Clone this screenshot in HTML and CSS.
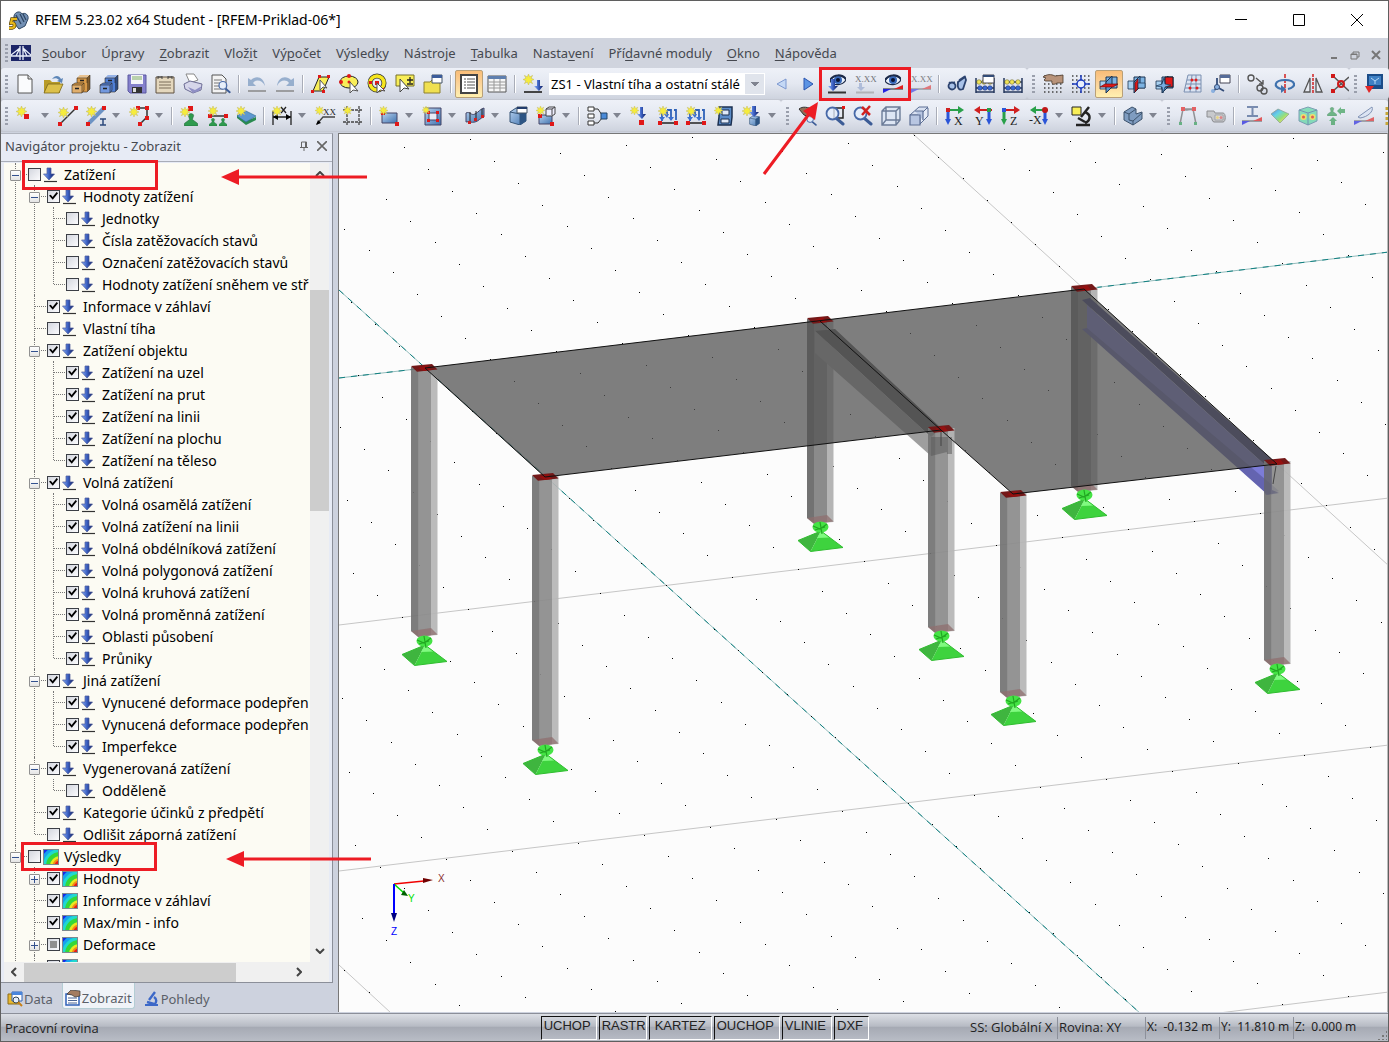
FILE: index.html
```html
<!DOCTYPE html>
<html lang="cs">
<head>
<meta charset="utf-8">
<title>RFEM 5.23.02 x64 Student</title>
<link rel="stylesheet" href="styles.css">
</head>
<body>
<svg class="defs" aria-hidden="true">
  <defs>
    <linearGradient id="g-blue" x1="0" y1="0" x2="1" y2="1"><stop offset="0" stop-color="#b9d3f0"/><stop offset="1" stop-color="#3f72ae"/></linearGradient>
    <linearGradient id="g-load" x1="0" y1="0" x2="1" y2="0"><stop offset="0" stop-color="#8db4ff"/><stop offset=".5" stop-color="#3b5fc0"/><stop offset="1" stop-color="#0c1a5c"/></linearGradient>
    <linearGradient id="g-rain" x1="0" y1="0" x2="1" y2="1"><stop offset="0" stop-color="#3355dd"/><stop offset=".35" stop-color="#3dcde0"/><stop offset=".6" stop-color="#7ddc50"/><stop offset=".8" stop-color="#f2e03a"/><stop offset="1" stop-color="#e8402a"/></linearGradient>
    <symbol id="star" viewBox="0 0 12 12"><path d="M6 0l1.300 3.200L10.500 1.500 8.800 4.700 12 6 8.800 7.300l1.700 3.200-3.200-1.700L6 12 4.700 8.800 1.500 10.500l1.700-3.200L0 6l3.200-1.300L1.500 1.500l3.200 1.700z" fill="#f6ec3c" stroke="#c4bb60" stroke-width=".6"/></symbol>
    <symbol id="node" viewBox="0 0 4 4"><rect width="4" height="4" fill="#e01818"/></symbol>
    <symbol id="eye" viewBox="0 0 16 12"><path d="M0 7C3 1 12 0 16 6 12 12 4 12 0 7z" fill="#e9f1fc" stroke="#1c2a48" stroke-width="1.200"/><circle cx="8" cy="6" r="4" fill="#3768b8"/><circle cx="8" cy="6" r="2" fill="#0a1230"/><path d="M0 6C4 0 12 0 16 5" fill="none" stroke="#1c2a48" stroke-width="2"/></symbol>
    <symbol id="diag" viewBox="0 0 20 8"><path d="M0 4h20" stroke="#222" stroke-width="1"/><path d="M0 8V4h8z" fill="#2323e0"/><path d="M20 0v4h-9z" fill="#e02020"/></symbol>
    <symbol id="load" viewBox="0 0 16 16"><path d="M4 1h4v6h3.500L6 13 .5 7H4z" fill="url(#g-load)" stroke="#4a5a9a" stroke-width=".7"/><path d="M1 14.500h13" stroke="#333" stroke-width="1.200"/></symbol>
    <symbol id="contour" viewBox="0 0 16 16"><rect width="16" height="16" fill="#1728e8"/><g clip-path="url(#sq)"><circle cx="17" cy="17" r="20" fill="#18a0f0"/><circle cx="17" cy="17" r="17" fill="#20d8d0"/><circle cx="17" cy="17" r="14" fill="#35d838"/><circle cx="17" cy="17" r="10" fill="#e8e820"/><circle cx="17" cy="17" r="7.500" fill="#f58a18"/><circle cx="17" cy="17" r="5.500" fill="#e81c1c"/></g><rect x=".5" y=".5" width="15" height="15" fill="none" stroke="#7d8a8f"/></symbol>
    <clipPath id="sq"><rect width="16" height="16"/></clipPath>
    <symbol id="cabinet" viewBox="0 0 20 20"><path d="M6 4l3-3h10v14l-3 3H6z"/><path d="M16 4l3-3v14l-3 3z" fill="#000" fill-opacity=".4"/><path d="M6 4l3-3h10l-3 3z" fill="#fff" fill-opacity=".4"/><path d="M1 11l3-2h9v7l-2 3H1z"/><path d="M1 11h10v8H1z" fill="#fff" fill-opacity=".2"/><path d="M6 4h10v5M6 4v5M1 11l3-2h9v7l-2 3H1zM1 11h10v8M11 11l2-2M16 4l3-3v14l-3 3h-4" fill="none" stroke="#2a2018" stroke-opacity=".7" stroke-width=".8"/><path d="M4 14.500h4M9 6.500h4" stroke="#222" stroke-width="1.500"/></symbol>
    <symbol id="cube" viewBox="0 0 18 18"><path d="M1 5l6-4 10 2v11l-6 4-10-3z" fill="url(#g-blue)" stroke="#375577"/><path d="M1 5l10 2 6-4M11 7v11" fill="none" stroke="#375577"/><path d="M11 7l6-4v11l-6 4z" fill="#2d5584"/></symbol>
    <symbol id="planes" viewBox="0 0 20 20"><path d="M7 3h11v11H7z" fill="#7db3e2" stroke="#1b3350"/><path d="M1 7h6v8H1z" fill="#a8d0f0" stroke="#1b3350" stroke-width=".8"/><path d="M7 8l6-6v11l-6 6z" fill="#5b97cf" stroke="#1b3350"/></symbol>
    <symbol id="gridpts" viewBox="0 0 20 20"><path d="M1 2h19M1 6h19M1 10h19M1 14h19M1 18h19" stroke="#444" stroke-width="1.500" stroke-dasharray="1.500 2.500"/></symbol>
    <symbol id="lens" viewBox="0 0 20 20"><path d="M11 12l7 6" stroke="#3c5c96" stroke-width="3" stroke-linecap="round"/><circle cx="7.500" cy="7.500" r="6" fill="#e4eefb" fill-opacity=".8" stroke="#4668a8" stroke-width="1.800"/></symbol>
    <symbol id="green" viewBox="0 0 10 10"><path d="M3 2c0-2 4-2 4 0l-1 3 4 3v2H0V8l4-3z" fill="#2f9a4e" stroke="#1f6a38" stroke-width=".5"/></symbol>
    <symbol id="multiload" viewBox="0 0 20 20"><path d="M4 15V7M9 4h4v10M16 4h2v10M9 4v6" fill="none" stroke="#2f62b8" stroke-width="1.800"/><path d="M1 11h6l-3 4zM10 11h6l-3 4zM6 8h5l-2 4z" fill="#3b6fd0"/><path d="M1 17h18" stroke="#222" stroke-width="1.500"/><use href="#star" width="10" height="10"/><use href="#node" x="0" y="15" width="4" height="4"/><use href="#node" x="16" y="15" width="4" height="4"/></symbol>
    <symbol id="abacus" viewBox="0 0 20 20"><path d="M1 4v15M19 4v15M1 8h18M1 14h18M1 18h18" stroke="#26385e" stroke-width="1.500"/><g fill="#f0e458" stroke="#5e5a20" stroke-width=".5"><circle cx="4" cy="8" r="2.300"/><circle cx="9" cy="8" r="2.300"/><circle cx="15" cy="8" r="2.300"/></g><g fill="#3a68d0" stroke="#182d68" stroke-width=".5"><circle cx="5" cy="14" r="2.300"/><circle cx="10" cy="14" r="2.300"/><circle cx="15" cy="14" r="2.300"/></g></symbol>

    <symbol id="cap" viewBox="0 0 28 10" overflow="visible"><path d="M0 2L21 0l5.500 5.500L6 7.700z" fill="#731818"/><path d="M7 4l9-3 4 5-7 1z" fill="#941010"/></symbol>
    <symbol id="support" overflow="visible"><path d="M23 9L0 18.500 12.500 29.500z" fill="#3fb53f"/><path d="M23 9l22 16.500-32.500 4z" fill="#3ed33e"/><path d="M23 9l9 6.500-13 .5z" fill="#80fa80"/><path d="M23 9L0 18.500l12.500 11L45 25.500z" fill="none" stroke="#30bd30"/><ellipse cx="22.500" cy="5" rx="8" ry="5.500" fill="#45e345"/><path d="M15 4l7 3 7-5M17 8l10-3M22 0l2 12" stroke="#22a822" stroke-width="1.200" fill="none"/></symbol>
    <symbol id="col-s" overflow="visible"><path d="M0 0h7.500v205l-7.500-6z" fill="#727272"/><path d="M7 0h13v203.500L7 205z" fill="#8b8b8b"/><path d="M20 0h6.500v203l-6.500.5z" fill="#b5b5b5"/><path d="M0 199l20-3 6.500 6.500L7 205z" fill="#8f6f6f" fill-opacity=".75"/></symbol>
    <symbol id="col-l" overflow="visible"><path d="M0 0h7.500v270l-7.500-6z" fill="#727272"/><path d="M7 0h13v268.500L7 270z" fill="#8b8b8b"/><path d="M20 0h6.500v268l-6.500.5z" fill="#b5b5b5"/><path d="M0 264l20-3 6.500 6.500L7 270z" fill="#8f6f6f" fill-opacity=".75"/></symbol>
  </defs>
</svg>

<div class="window">
  <header class="titlebar">
    <svg class="app-icon" viewBox="0 0 20 20"><path d="M5 6c1-5 7-5 8-2 3-2 7 1 6 5l-3 7-6 3-5-6z" fill="#7390b4" stroke="#2e4663"/><path d="M7 5l5 9M11 4l4 8M14 4l3 6" stroke="#2e4663" stroke-width="1.300"/><path d="M8 9H3L2 13c4-1 5 4 1 5H0" fill="none" stroke="#5a4408" stroke-width="3.600"/><path d="M8 9H3L2 13c4-1 5 4 1 5H0" fill="none" stroke="#e8b81c" stroke-width="2.200"/></svg>
    <h1>RFEM 5.23.02 x64 Student - [RFEM-Priklad-06*]</h1>
    <div class="win-buttons">
      <button aria-label="Minimalizovat"><svg viewBox="0 0 12 12"><path d="M0 5.500h12"/></svg></button>
      <button aria-label="Maximalizovat"><svg viewBox="0 0 12 12"><path d="M.5.500h11v11H.5z"/></svg></button>
      <button aria-label="Zavřít"><svg viewBox="0 0 12 12"><path d="M0 0l12 12M12 0L0 12"/></svg></button>
    </div>
  </header>

  <nav class="menubar">
    <span class="grip"></span>
    <svg class="doc-icon" viewBox="0 0 20 16"><path d="M0 0h20v16H0z" fill="#1c2568"/><path d="M0 11h20M9 1v14M12 1v14M0 10L9 3M12 3l8 7M9 3L5 11M12 3l4 8" stroke="#e8eefa" stroke-width="1.300" fill="none"/></svg>
    <button><u>S</u>oubor</button><button>Úpr<u>a</u>vy</button><button><u>Z</u>obrazit</button><button>Vlož<u>i</u>t</button><button>Vý<u>p</u>očet</button><button>Výsled<u>k</u>y</button><button>Nástro<u>j</u>e</button><button><u>T</u>abulka</button><button>Nasta<u>v</u>ení</button><button>Pří<u>d</u>avné moduly</button><button><u>O</u>kno</button><button><u>N</u>ápověda</button>
    <div class="doc-buttons">
      <button aria-label="Minimalizovat okno"><svg viewBox="0 0 10 10"><path d="M2 8h6" stroke-width="2"/></svg></button>
      <button aria-label="Obnovit okno"><svg viewBox="0 0 10 10"><path d="M1 4h6v5H1zM3 4V2h6v5H7M1 4.500h6"/></svg></button>
      <button aria-label="Zavřít okno"><svg viewBox="0 0 10 10"><path d="M1 1l8 8M9 1L1 9" stroke-width="2"/></svg></button>
    </div>
  </nav>

  <div class="toolbar">
    <div class="group">
      <span class="grip"></span>
      <button class="tb" aria-label="Nový"><svg><path d="M3 1h10l4 4v14H3z" fill="#fafbfd" stroke="#555"/><path d="M13 1v4h4" fill="#ddd" stroke="#555"/></svg></button>
      <button class="tb" aria-label="Otevřít"><svg><path d="M1 6h6l2 2h8v11H1z" fill="#b89b28"/><path d="M1 19l4-9h15l-4 9z" fill="#dcc04a" stroke="#77641a" stroke-width=".8"/><path d="M9 5c3-4 7-4 9 0l2-1-1 5-5-2 2-1c-2-2-4-2-7-1z" fill="#5d86b8"/></svg></button>
      <button class="tb" aria-label="Správce projektů"><svg fill="#d99a48"><use href="#cabinet"/></svg></button>
      <button class="tb" aria-label="Správce bloků"><svg fill="#4f7fd6"><use href="#cabinet"/></svg></button>
      <button class="tb" aria-label="Uložit"><svg><path d="M1 1h18v18H3l-2-2z" fill="#8480cc" stroke="#5b58a0"/><path d="M4 1h12v9H4z" fill="#f4f4fa"/><path d="M5 3h10M5 5h10" stroke="#7fae60"/><path d="M5 13h10v6H5z" fill="#333"/><path d="M6 14h3v4H6z" fill="#ddd"/></svg></button>
      <button class="tb" aria-label="Seznam"><svg><path d="M1 3h18v16H1z" fill="#e4d7bd" stroke="#5e5040"/><path d="M4 8h12M4 11h12M4 14h12" stroke="#7b6d58"/><path d="M3 5V2M7 5V2M13 5V2M17 5V2M3 3h4M13 3h4" fill="none" stroke="#444"/></svg></button>
      <button class="tb" aria-label="Tisk"><svg><path d="M3 0h8l4 6-8 3z" fill="#fff" stroke="#888"/><path d="M1 10l6-3 12 3-1 6-8 3-8-4z" fill="#d6d6ea" stroke="#6c6c94"/><path d="M5 13l7 3 7-4-3 5-6 2z" fill="#8f8fc4"/></svg></button>
      <button class="tb" aria-label="Náhled"><svg><path d="M1 1h10l4 4v14H1z" fill="#f3f3f3" stroke="#555"/><path d="M3 6h8M3 9h6M3 12h6M3 15h9" stroke="#777"/><use href="#lens" x="7" y="6" width="13" height="14"/></svg></button>
      <span class="sep"></span>
      <button class="tb" aria-label="Zpět"><svg opacity=".75"><path d="M1 4v8h8L6 9c3-4 9-3 12 3C17 3 9 1 4 6z" fill="#7d9cc2"/><path d="M1 17h18" stroke="#888" stroke-width="2"/></svg></button>
      <button class="tb" aria-label="Vpřed"><svg opacity=".75"><path d="M19 4v8h-8l3-3C11 5 5 6 2 12 3 3 11 1 16 6z" fill="#7d9cc2"/><path d="M1 17h18" stroke="#888" stroke-width="2"/></svg></button>
      <span class="sep"></span>
      <button class="tb" aria-label="Výběr rovnoběžníkem"><svg><path d="M8 3h10l-6 14H2z" fill="#f8ee58" stroke="#222"/><g fill="#e01818"><path d="M7 1h3v3H7zM0 16h3v3H0zM11 16h3v3h-3zM16 1h3v3h-3z"/></g><path d="M9 6v10l3-3 4 1z" fill="#fff" stroke="#555"/></svg></button>
      <button class="tb" aria-label="Výběr elipsou"><svg><ellipse cx="10" cy="8" rx="9" ry="6" fill="#f8ee58" stroke="#222"/><circle cx="10" cy="2" r="2" fill="#e01818"/><circle cx="2" cy="8" r="2" fill="#e01818"/><circle cx="10" cy="8" r="1.500" fill="#e01818"/><path d="M11 8v11l3-3 5 1z" fill="#fff" stroke="#555"/></svg></button>
      <button class="tb" aria-label="Výběr prstencem"><svg><circle cx="10" cy="9" r="7" fill="none" stroke="#333" stroke-width="5"/><circle cx="10" cy="9" r="7" fill="none" stroke="#f6e61e" stroke-width="3.500"/><path d="M8 7h4v4H8zM2 7h3v3H2zM14 14h3v3h-3z" fill="#e01818"/><path d="M10 9v10l3-3 5 1z" fill="#fff" stroke="#555"/></svg></button>
      <button class="tb" aria-label="Zvláštní výběr"><svg><path d="M1 1h18v11H1z" fill="#f8ee58" stroke="#77702a"/><path d="M12 6h6M15 3v6M12 10h6" stroke="#222" stroke-width="1.300"/><path d="M5 5v13l4-4 5 1z" fill="#fff" stroke="#444"/></svg></button>
      <button class="tb" aria-label="Viditelnost"><svg><path d="M1 8h6l2-2h8v13H1z" fill="#f0e050" stroke="#8c8030"/><path d="M9 1h10v8H9z" fill="#fff" stroke="#456"/><path d="M9 1h10v3H9z" fill="#3c5c9a"/></svg></button>
      <span class="sep"></span>
      <button class="tb on" aria-label="Navigátor" aria-pressed="true"><svg><path d="M2 1h16v18H2z" fill="#fff" stroke="#444" stroke-width="2"/><path d="M5 5h2M5 8h2M5 11h2M5 14h2M8 5h8M8 8h8M8 11h8M8 14h8" stroke="#555"/></svg></button>
      <button class="tb" aria-label="Tabulky"><svg><path d="M1 2h18v16H1z" fill="#f7f7f7" stroke="#555"/><path d="M1 2h18v3H1z" fill="#5f7fae"/><path d="M1 8h18M1 11h18M1 14h18M7 5v13M13 5v13" stroke="#999"/></svg></button>
      <span class="sep"></span>
      <button class="tb" aria-label="Nový zatěžovací stav"><svg><use href="#star" x="0" y="0" width="11" height="11"/><path d="M1 18h18" stroke="#444" stroke-width="2"/><path d="M14 6h3v6h3l-4 5-5-5h3z" fill="url(#g-load)"/></svg></button>
      <select class="combo" aria-label="Zatěžovací stav"><option>ZS1 - Vlastní tíha a ostatní stálé</option></select>
      <button class="tb" aria-label="Předchozí"><svg><path d="M15 5v10L6 10z" fill="#c4d8f5" stroke="#7c98d0"/></svg></button>
      <button class="tb" aria-label="Následující"><svg><path d="M5 4v12l9-6z" fill="#5c94e4" stroke="#2a55b0"/></svg></button>
      <button class="tb" aria-label="Zobrazit zatížení"><svg><use href="#eye" x="3" y="0" width="16" height="12"/><path d="M4 5h4v7h3l-5 5-5-5h3z" fill="url(#g-load)"/><path d="M1 18.500h18" stroke="#333" stroke-width="2"/></svg></button>
      <button class="tb" aria-label="Hodnoty zatížení"><svg opacity=".6"><text x="0" y="8" class="xx">X.XX</text><path d="M4 9h3v4h3l-4 4-4-4h2z" fill="#8ea2cc"/><path d="M1 18.500h18" stroke="#999" stroke-width="2"/></svg></button>
      <button class="tb" aria-label="Zobrazit výsledky"><svg><use href="#eye" x="2" y="0" width="16" height="12"/><use href="#diag" x="0" y="11" width="20" height="8"/></svg></button>
      <button class="tb" aria-label="Hodnoty výsledků"><svg opacity=".55"><text x="0" y="8" class="xx">X.XX</text><use href="#diag" x="0" y="11" width="20" height="8"/></svg></button>
      <span class="sep"></span>
      <button class="tb" aria-label="Panel"><svg><path d="M2 8l2 2 4-2M12 6l6-4" fill="none" stroke="#334c78" stroke-width="1.500"/><circle cx="5" cy="12" r="3.500" fill="#a9c2e8" stroke="#2b426e" stroke-width="1.800"/><path d="M11 8l7-5 1 3-3 9c-4 2-6-1-5-7z" fill="#a9c2e8" stroke="#2b426e" stroke-width="1.800"/></svg></button>
      <button class="tb" aria-label="Parametry výpočtu"><svg><use href="#abacus"/><path d="M8 1h11v8H8z" fill="#fff" stroke="#445"/><path d="M8 1h11v2H8z" fill="#334c78"/></svg></button>
      <button class="tb" aria-label="Spočítat vše"><svg><use href="#abacus"/></svg></button>
    </div>
    <div class="group clip">
      <span class="grip"></span>
      <button class="tb" aria-label="Pracovní rovina"><svg><use href="#gridpts"/><path d="M0 3c4-3 8-3 12-1l8-1v8h-6c-4 3-6 0-5-2H3c-2 0-2-2 0-3z" fill="#b8937a" stroke="#4a3a2c" stroke-width=".8"/></svg></button>
      <button class="tb" aria-label="Uchopení"><svg><use href="#gridpts"/><path d="M10 1v18M1 10h18" stroke="#1c3cc0" stroke-width="1.500"/><circle cx="10" cy="10" r="4" fill="#eaf0fc" stroke="#1c3cc0" stroke-width="1.500"/></svg></button>
      <button class="tb on" aria-label="Rovina XY" aria-pressed="true"><svg><use href="#planes"/><path d="M1 13l5-3h13l-5 3z" fill="#e01818" stroke="#701010" stroke-width=".7"/></svg></button>
      <button class="tb" aria-label="Rovina YZ"><svg><use href="#planes"/><path d="M8 18V9l3-4v9z" fill="#e01818" stroke="#701010" stroke-width=".7"/><path d="M11 9h7v5h-7z" fill="#7db3e2" stroke="#1b3350" stroke-width=".7"/></svg></button>
      <button class="tb" aria-label="Rovina XZ"><svg><use href="#planes"/><path d="M10 3h8v10h-8z" fill="#e01818" stroke="#123"/><path d="M9 4l1 6 6 1-6 2-2 6-1-6-6-1 6-2z" fill="#76ace0" stroke="#1b3350" stroke-width=".7"/></svg></button>
      <button class="tb" aria-label="Rastr"><svg><path d="M5 1h13v17H1zM4 6h14M3 10h15M2 14h16M9 1L7 18M13 1v17" fill="#dbe4f2" stroke="#7a8fb0"/><g fill="#e02020"><circle cx="9" cy="6" r="1.500"/><circle cx="13" cy="6" r="1.500"/><circle cx="7" cy="14" r="1.500"/><circle cx="14" cy="14" r="1.500"/></g></svg></button>
      <button class="tb" aria-label="Souřadné systémy"><svg><path d="M6 4v9l-4 5M6 13l7 4" fill="none" stroke="#334c78" stroke-width="1.800"/><circle cx="6" cy="13" r="2.500" fill="#8ab0e0" stroke="#334c78"/><circle cx="2" cy="17" r="2" fill="#8ab0e0"/><path d="M9 1h10v8H9z" fill="#fff" stroke="#445"/><path d="M9 1h10v3H9z" fill="#566c98"/></svg></button>
      <span class="sep"></span>
      <button class="tb" aria-label="Kopírovat"><svg fill="none" stroke="#555" stroke-width="1.400"><circle cx="4" cy="4" r="3"/><circle cx="13" cy="14" r="3"/><circle cx="17" cy="17" r="3"/><path d="M9 4l7 6M16 6v4h-4"/></svg></button>
      <button class="tb" aria-label="Otočit"><svg><path d="M10 0v20" stroke="#d02020" stroke-width="1.500" stroke-dasharray="4 1"/><path d="M6 15C-2 13-1 6 10 6s12 7 3 9" fill="none" stroke="#3f72ae" stroke-width="2.200"/><path d="M6 11v8l5-4z" fill="#3f72ae"/></svg></button>
      <button class="tb" aria-label="Zrcadlit"><svg><path d="M10 0v20" stroke="#d02020" stroke-width="1.500" stroke-dasharray="3 1"/><path d="M7 4v14H1zM13 4v14h6z" fill="#e8ebf2" stroke="#555" stroke-width="1.300"/></svg></button>
      <button class="tb cut" aria-label="Rozdělit"><svg><path d="M2 2l16 15M2 17L18 3" stroke="#555" stroke-width="1.500"/><path d="M0 0h4v4H0zM0 15h4v4H0z" fill="#d01818"/><circle cx="10" cy="10" r="3" fill="none" stroke="#d01818" stroke-width="2"/></svg></button>
    </div>
    <div class="group">
      <span class="grip"></span>
      <button class="tb" aria-label="Moduly"><svg><path d="M2 0h16v15H2z" fill="#1a4c88"/><path d="M4 2h12v9H4z" fill="#3e80c4"/><path d="M6 4l4 3v3M14 4l-4 3" stroke="#b8d8f4" fill="none"/><path d="M0 12h9l-5 7z" fill="#e02828"/></svg></button>
    </div>
  </div>

  <div class="toolbar">
    <div class="group">
      <span class="grip"></span>
      <button class="tb dd" aria-label="Nový uzel"><svg><use href="#star" x="1" y="0" width="11" height="11"/><use href="#node" x="9" y="8" width="5" height="5"/></svg></button>
      <button class="tb" aria-label="Nová linie"><svg><path d="M2 18L18 2" stroke="#333" stroke-width="1.500"/><use href="#node" y="16" width="4" height="4"/><use href="#node" x="16" width="4" height="4"/><use href="#star" x="0" y="1" width="11" height="11"/></svg></button>
      <button class="tb dd" aria-label="Nový prut"><svg><path d="M3 17L18 2" stroke="#6d93c4" stroke-width="4"/><use href="#node" y="16" width="4" height="4"/><use href="#node" x="16" width="4" height="4"/><use href="#star" x="0" y="0" width="11" height="11"/><path d="M14 13h6M14 19h6M17 13v6" stroke="#2c4a7c" stroke-width="1.500"/></svg></button>
      <button class="tb dd" aria-label="Nová polylinie"><svg><path d="M8 2h10v9l-7 7" fill="none" stroke="#333" stroke-width="1.500"/><use href="#node" x="7" width="4" height="4"/><use href="#node" x="16" width="4" height="4"/><use href="#node" x="16" y="10" width="4" height="4"/><use href="#node" x="9" y="16" width="4" height="4"/><use href="#star" x="0" y="1" width="10" height="10"/></svg></button>
      <span class="sep"></span>
      <button class="tb" aria-label="Uzlová podpora"><svg><use href="#green" x="4" y="7" width="14" height="13"/><use href="#node" x="8" width="5" height="5"/><use href="#star" y="1" width="10" height="10"/></svg></button>
      <button class="tb" aria-label="Liniová podpora"><svg><path d="M2 10h16" stroke="#333" stroke-width="1.500"/><use href="#green" x="1" y="12" width="8" height="8"/><use href="#green" x="11" y="12" width="8" height="8"/><use href="#node" y="8" width="4" height="4"/><use href="#node" x="16" y="8" width="4" height="4"/><use href="#star" y="0" width="10" height="10"/></svg></button>
      <button class="tb" aria-label="Plošná podpora"><svg><path d="M1 12l9 7 10-5v-3L10 15 1 9z" fill="#2a8a50"/><path d="M1 10l9-5 10 5-10 6z" fill="#5e98d0" stroke="#2a6a90" stroke-width=".6"/><use href="#star" y="0" width="10" height="10"/></svg></button>
      <span class="sep"></span>
      <button class="tb dd" aria-label="Kóta"><svg><path d="M1 5v14M19 5v14M1 11h18" stroke="#222" stroke-width="1.300"/><path d="M1 11l5-3v6zM19 11l-5-3v6z"/><path d="M9 1l5 6M14 1L9 7" stroke="#222" stroke-width="1.300"/><use href="#star" y="0" width="10" height="10"/></svg></button>
      <button class="tb" aria-label="Komentář"><svg><path d="M2 18l6-7h12" fill="none" stroke="#444" stroke-width="1.300"/><path d="M1 19l2-5 3 3z"/><text x="8" y="9" class="xx">XX</text><use href="#star" y="0" width="9" height="9"/></svg></button>
      <button class="tb" aria-label="Pomocná linie"><svg><path d="M4 0v20M16 0v20M0 4h20M0 16h20" stroke="#444" stroke-width="1.300" stroke-dasharray="3 1"/><use href="#star" y="0" width="9" height="9"/></svg></button>
      <span class="sep"></span>
      <button class="tb dd" aria-label="Nová plocha"><svg><path d="M3 7h15v10H3z" fill="url(#g-blue)" stroke="#446"/><use href="#node" x="2" y="5" width="4" height="4"/><use href="#node" x="16" y="16" width="4" height="4"/><use href="#star" y="0" width="9" height="9"/></svg></button>
      <button class="tb dd" aria-label="Otvor"><svg><path d="M3 2h16v17H3z" fill="url(#g-blue)" stroke="#446"/><path d="M7 7h8v7H7z" fill="#e8ecf6" stroke="#446"/><g fill="#e01818"><path d="M5 5h3v3H5zM14 5h3v3h-3zM5 13h3v3H5zM14 13h3v3h-3z"/></g><use href="#star" y="0" width="8" height="8"/></svg></button>
      <button class="tb dd" aria-label="Zakřivená plocha"><svg><path d="M1 7c4-2 5 3 9 1s5-5 9-6v9c-4 1-5 4-9 5s-6-1-9 0z" fill="url(#g-blue)" stroke="#446"/><path d="M5 6v9M11 5v10M17 3v8" stroke="#222"/><path d="M3 15h3v3H3zM9 12h3v3H9zM16 9h3v3h-3z" fill="#d02020"/></svg></button>
      <button class="tb" aria-label="Těleso"><svg><use href="#cube" x="1" y="1" width="18" height="18"/><path d="M9 1h10v6H9z" fill="#fff" stroke="#456"/><path d="M9 1h10v2H9z" fill="#223c6c"/></svg></button>
      <button class="tb dd" aria-label="Nové těleso"><svg><path d="M3 9h13v9H3z" fill="url(#g-blue)" stroke="#446"/><path d="M10 3l3-2h6v7l-3 2h-6zM10 3h6v6M16 3l3-2" fill="#eef" stroke="#444"/><use href="#node" x="2" y="8" width="4" height="4"/><use href="#node" x="14" y="16" width="4" height="4"/><use href="#star" y="0" width="9" height="9"/></svg></button>
      <span class="sep"></span>
      <button class="tb dd" aria-label="Kombinace"><svg><path d="M1 1h6v4H1zM1 8h6v4H1zM1 15h6v4H1z" fill="#fff" stroke="#333"/><path d="M7 3h4l4 6M7 17h4l4-5" fill="none" stroke="#333"/><path d="M14 7h6v6h-6z" fill="#4a8ad8" stroke="#246"/></svg></button>
      <button class="tb" aria-label="Zatížení na uzel"><svg><use href="#star" width="9" height="9"/><path d="M10 1h3v7h3l-4 5-5-5h3z" fill="url(#g-load)"/><use href="#node" x="9" y="14" width="5" height="5"/></svg></button>
      <button class="tb" aria-label="Zatížení na linii"><svg><use href="#multiload"/></svg></button>
      <button class="tb" aria-label="Zatížení na prut"><svg><use href="#multiload"/></svg></button>
      <button class="tb" aria-label="Zatížení na plochu"><svg><path d="M5 1h13v10l-1 8H4l1-8z" fill="#5b8cc8" stroke="#1c3050" stroke-width="1.500"/><path d="M8 4h7v5H8zM7 13h8v4H7z" fill="#dfe9f8" stroke="#1c3050"/><use href="#star" width="9" height="9"/></svg></button>
      <button class="tb dd" aria-label="Zatížení na těleso"><svg><use href="#cube" x="7" y="9" width="11" height="11"/><path d="M10 0h4v6h3l-5 5-5-5h3z" fill="url(#g-load)"/><use href="#star" width="10" height="10"/></svg></button>
    </div>
    <div class="group">
      <span class="grip"></span>
      <button class="tb" aria-label="Výřez"><svg><path d="M2 3c4-3 8-2 16 1l-2 8-9-3z" fill="#907058" stroke="#333"/><use href="#lens" x="9" y="9" width="11" height="11"/></svg></button>
      <button class="tb" aria-label="Zvětšit okno"><svg><path d="M9 2h9v10H9z" fill="none" stroke="#222" stroke-width="1.500"/><use href="#lens"/><use href="#node" x="17" width="3" height="3"/></svg></button>
      <button class="tb" aria-label="Celý pohled"><svg><use href="#lens"/><path d="M9 1l8 8M17 0l-8 9" stroke="#d02020" stroke-width="2.500"/></svg></button>
      <button class="tb" aria-label="Izometrie"><svg><path d="M1 5l4-4h14v13l-4 5H1zM1 5h14v14M15 5l4-4M5 1v13h14M5 14l-4 5" fill="#dde6f4" stroke="#6c7c98" stroke-width="1.400"/></svg></button>
      <button class="tb" aria-label="Posun pohledu"><svg><path d="M11 2h8v8l-8 8z" fill="#e4eaf6" stroke="#5c6e94"/><path d="M1 9l9-8h9l-8 8z" fill="#d8e0f0" stroke="#5c6e94"/><path d="M1 9h10v10H1zM6 5h8v9" fill="#b8c6e2" stroke="#5c6e94" stroke-width="1.200"/></svg></button>
      <span class="sep"></span>
      <button class="tb" aria-label="Pohled X"><svg><path d="M1 3h12V0l6 4-6 4V5H1z" fill="#29a04a"/><path d="M3 4v10" stroke="#2b55d8" stroke-width="3"/><path d="M0 13h6l-3 6z" fill="#2b55d8"/><path d="M1 2h4v4H1z" fill="#d02020"/><text x="9" y="19" class="ax">X</text></svg></button>
      <button class="tb" aria-label="Pohled Y"><svg><path d="M19 3H7V0L1 4l6 4V5h12z" fill="#d02020"/><path d="M16 4v10" stroke="#2b55d8" stroke-width="3"/><path d="M13 13h6l-3 6z" fill="#2b55d8"/><path d="M14 2h4v4h-4z" fill="#29a04a"/><text x="2" y="19" class="ax">Y</text></svg></button>
      <button class="tb" aria-label="Pohled Z"><svg><path d="M1 3h12V0l6 4-6 4V5H1z" fill="#d02020"/><path d="M3 4v10" stroke="#29a04a" stroke-width="3"/><path d="M0 13h6l-3 6z" fill="#29a04a"/><path d="M1 2h4v4H1z" fill="#2b55d8"/><text x="9" y="19" class="ax">Z</text></svg></button>
      <button class="tb dd" aria-label="Pohled -X"><svg><path d="M19 3H7V0L1 4l6 4V5h12z" fill="#29a04a"/><path d="M16 4v10" stroke="#2b55d8" stroke-width="3"/><path d="M13 13h6l-3 6z" fill="#2b55d8"/><circle cx="16" cy="4" r="3" fill="#c01818"/><text x="0" y="18" class="ax">-X</text></svg></button>
      <button class="tb dd" aria-label="Vykreslení"><svg><path d="M0 1h9v8H0z" fill="#f8ee58" stroke="#222"/><path d="M17 1L9 11M13 6c7 3 5 9 0 11M4 19h14M6 12l7 4" stroke="#222" stroke-width="2.500" fill="none"/></svg></button>
      <span class="sep"></span>
      <button class="tb dd" aria-label="Model"><svg><path d="M1 6l8-5 4 2v5l6-2v7l-9 6-9-5z" fill="#7f9cc0" stroke="#3c526c"/><path d="M1 6l5 2v6l4 1 9-8M6 8l7-5M10 15v4" fill="none" stroke="#3c526c"/></svg></button>
    </div>
    <div class="group clip last">
      <span class="grip"></span>
      <button class="tb" aria-label="Deformace"><svg opacity=".65"><path d="M2 18L5 3h10l3 15M5 3c3 3 8-2 11 2" fill="none" stroke="#666" stroke-width="1.500"/><use href="#node" x="3" y="1" width="4" height="4"/><use href="#node" x="14" y="1" width="4" height="4"/><path d="M1 16h3v3H1zM16 16h3v3h-3z" fill="#2c9a50"/></svg></button>
      <button class="tb" aria-label="Animace"><svg opacity=".6"><path d="M1 5h7l1 2h8c3 0 3 9 0 9H8c-2 0-2-4-3-5H1z" fill="#b4b4b4" stroke="#555"/><path d="M9 9h8v5H9z" fill="#ddd" stroke="#777"/><circle cx="15" cy="11.500" r="1.500" fill="#d44"/><circle cx="11.500" cy="11.500" r="1.500" fill="#e8c840"/></svg></button>
      <span class="sep"></span>
      <button class="tb" aria-label="Pruty"><svg opacity=".7"><path d="M5 1h11M5 10h11M10.500 1v9" stroke="#4a6494" stroke-width="2"/><use href="#diag" y="11" width="20" height="8"/></svg></button>
      <button class="tb" aria-label="Plochy"><svg opacity=".75"><path d="M1 8l7-5 11 5-9 9z" fill="url(#g-rain)" stroke="#6a8a6a" stroke-width=".7"/></svg></button>
      <button class="tb" aria-label="Tělesa"><svg opacity=".75"><path d="M1 4l9-3 9 3v11l-9 4-9-4z" fill="#66d8a8" stroke="#5a86a0"/><path d="M1 4l9 3 9-3M10 7v12" fill="none" stroke="#4a76a0"/><circle cx="5.500" cy="11" r="3" fill="#f0dc40"/><circle cx="5.500" cy="11" r="1.500" fill="#e03020"/><circle cx="14.500" cy="11" r="3" fill="#f0dc40"/><circle cx="14.500" cy="11" r="1.500" fill="#e03020"/></svg></button>
      <button class="tb" aria-label="Reakce"><svg opacity=".65"><use href="#green" x="1" y="1" width="10" height="9"/><path d="M19 3h-4V1l-4 4 4 4V7h4zM5 19v-4H3l4-4 4 4H9v4z" fill="#2f9a4e"/></svg></button>
      <button class="tb" aria-label="Řezy"><svg opacity=".65"><path d="M4 11L18 1c2 4-4 10-12 11z" fill="#d8e2f4" stroke="#4a6494"/><use href="#diag" y="11" width="20" height="8"/></svg></button>
      <button class="tb" aria-label="Hodnoty"><svg><path d="M5 1v18" stroke="#c8a838" stroke-width="3" stroke-dasharray="3 2"/></svg></button>
    </div>
  </div>

  <main class="work">
    <aside class="dock">
      <section class="panel">
        <header class="panel-head">
          <h2>Navigátor projektu - Zobrazit</h2>
          <button aria-label="Připnout"><svg viewBox="0 0 10 10"><path d="M1 6.500h8M2.500 6V1h5v5M6.500 1v5M5 7v3"/></svg></button>
          <button aria-label="Zavřít panel"><svg viewBox="0 0 10 10"><path d="M0 0l10 10M10 0L0 10" stroke-width="1.600"/></svg></button>
        </header>
        <div class="tree-box">
          <ul class="tree">
            <li><div class="row"><button class="exp" aria-label="Sbalit"></button><label><input type="checkbox"><svg><use href="#load"/></svg>Zatížení</label></div>
              <ul>
                <li><div class="row"><button class="exp" aria-label="Sbalit"></button><label><input type="checkbox" checked><svg><use href="#load"/></svg>Hodnoty zatížení</label></div>
                  <ul>
                    <li><div class="row"><label><input type="checkbox"><svg><use href="#load"/></svg>Jednotky</label></div></li>
                    <li><div class="row"><label><input type="checkbox"><svg><use href="#load"/></svg>Čísla zatěžovacích stavů</label></div></li>
                    <li><div class="row"><label><input type="checkbox"><svg><use href="#load"/></svg>Označení zatěžovacích stavů</label></div></li>
                    <li><div class="row"><label><input type="checkbox"><svg><use href="#load"/></svg>Hodnoty zatížení sněhem ve stř</label></div></li>
                  </ul></li>
                <li><div class="row"><label><input type="checkbox" checked><svg><use href="#load"/></svg>Informace v záhlaví</label></div></li>
                <li><div class="row"><label><input type="checkbox"><svg><use href="#load"/></svg>Vlastní tíha</label></div></li>
                <li><div class="row"><button class="exp" aria-label="Sbalit"></button><label><input type="checkbox" checked><svg><use href="#load"/></svg>Zatížení objektu</label></div>
                  <ul>
                    <li><div class="row"><label><input type="checkbox" checked><svg><use href="#load"/></svg>Zatížení na uzel</label></div></li>
                    <li><div class="row"><label><input type="checkbox" checked><svg><use href="#load"/></svg>Zatížení na prut</label></div></li>
                    <li><div class="row"><label><input type="checkbox" checked><svg><use href="#load"/></svg>Zatížení na linii</label></div></li>
                    <li><div class="row"><label><input type="checkbox" checked><svg><use href="#load"/></svg>Zatížení na plochu</label></div></li>
                    <li><div class="row"><label><input type="checkbox" checked><svg><use href="#load"/></svg>Zatížení na těleso</label></div></li>
                  </ul></li>
                <li><div class="row"><button class="exp" aria-label="Sbalit"></button><label><input type="checkbox" checked><svg><use href="#load"/></svg>Volná zatížení</label></div>
                  <ul>
                    <li><div class="row"><label><input type="checkbox" checked><svg><use href="#load"/></svg>Volná osamělá zatížení</label></div></li>
                    <li><div class="row"><label><input type="checkbox" checked><svg><use href="#load"/></svg>Volná zatížení na linii</label></div></li>
                    <li><div class="row"><label><input type="checkbox" checked><svg><use href="#load"/></svg>Volná obdélníková zatížení</label></div></li>
                    <li><div class="row"><label><input type="checkbox" checked><svg><use href="#load"/></svg>Volná polygonová zatížení</label></div></li>
                    <li><div class="row"><label><input type="checkbox" checked><svg><use href="#load"/></svg>Volná kruhová zatížení</label></div></li>
                    <li><div class="row"><label><input type="checkbox" checked><svg><use href="#load"/></svg>Volná proměnná zatížení</label></div></li>
                    <li><div class="row"><label><input type="checkbox" checked><svg><use href="#load"/></svg>Oblasti působení</label></div></li>
                    <li><div class="row"><label><input type="checkbox" checked><svg><use href="#load"/></svg>Průniky</label></div></li>
                  </ul></li>
                <li><div class="row"><button class="exp" aria-label="Sbalit"></button><label><input type="checkbox" checked><svg><use href="#load"/></svg>Jiná zatížení</label></div>
                  <ul>
                    <li><div class="row"><label><input type="checkbox" checked><svg><use href="#load"/></svg>Vynucené deformace podepřen</label></div></li>
                    <li><div class="row"><label><input type="checkbox" checked><svg><use href="#load"/></svg>Vynucená deformace podepřen</label></div></li>
                    <li><div class="row"><label><input type="checkbox" checked><svg><use href="#load"/></svg>Imperfekce</label></div></li>
                  </ul></li>
                <li><div class="row"><button class="exp" aria-label="Sbalit"></button><label><input type="checkbox" checked><svg><use href="#load"/></svg>Vygenerovaná zatížení</label></div>
                  <ul>
                    <li><div class="row"><label><input type="checkbox"><svg><use href="#load"/></svg>Odděleně</label></div></li>
                  </ul></li>
                <li><div class="row"><label><input type="checkbox" checked><svg><use href="#load"/></svg>Kategorie účinků z předpětí</label></div></li>
                <li><div class="row"><label><input type="checkbox"><svg><use href="#load"/></svg>Odlišit záporná zatížení</label></div></li>
              </ul></li>
            <li><div class="row"><button class="exp" aria-label="Sbalit"></button><label><input type="checkbox"><svg><use href="#contour"/></svg>Výsledky</label></div>
              <ul>
                <li><div class="row"><button class="exp plus" aria-label="Rozbalit"></button><label><input type="checkbox" checked><svg><use href="#contour"/></svg>Hodnoty</label></div></li>
                <li><div class="row"><label><input type="checkbox" checked><svg><use href="#contour"/></svg>Informace v záhlaví</label></div></li>
                <li><div class="row"><label><input type="checkbox" checked><svg><use href="#contour"/></svg>Max/min - info</label></div></li>
                <li><div class="row"><button class="exp plus" aria-label="Rozbalit"></button><label><input type="checkbox" class="mixed"><svg><use href="#contour"/></svg>Deformace</label></div></li>
                <li><div class="row"><label><input type="checkbox"><svg><use href="#contour"/></svg></label></div></li>
                <li><div class="row"></div></li>
              </ul></li>
            <li></li>
          </ul>
          <div class="vscroll"><button aria-label="Nahoru"><svg viewBox="0 0 10 6"><path d="M1 5l4-4 4 4"/></svg></button><span class="thumb"></span><button aria-label="Dolů"><svg viewBox="0 0 10 6"><path d="M1 1l4 4 4-4"/></svg></button></div>
        </div>
        <div class="hscroll"><button aria-label="Vlevo"><svg viewBox="0 0 6 10"><path d="M5 1L1 5l4 4"/></svg></button><span class="track"><span class="thumb"></span></span><button aria-label="Vpravo"><svg viewBox="0 0 6 10"><path d="M1 1l4 4-4 4"/></svg></button></div>
      </section>
      <nav class="tabs">
        <button><svg viewBox="0 0 16 16"><path d="M1 3h5l1 1h5v9H1z" fill="#e8b830" stroke="#8c6c18"/><path d="M5 1h10v9H5z" fill="#fff" stroke="#2f62b8"/><path d="M5 1h10v3H5z" fill="#4a86dc"/><circle cx="9" cy="9" r="3" fill="#e4eefb" stroke="#345"/><path d="M11 11l4 4" stroke="#c88018" stroke-width="2"/></svg>Data</button>
        <button class="active"><svg viewBox="0 0 16 16"><path d="M1 4h13v11H1z" fill="#fff" stroke="#2f62b8" stroke-width="1.500"/><path d="M3 8h9M3 10.500h9M3 13h9" stroke="#4a6494"/><path d="M2 4l4-4 9 1v5l-5 1-3-2z" fill="#a47c60" stroke="#333" stroke-width=".7"/></svg>Zobrazit</button>
        <button><svg viewBox="0 0 16 16"><path d="M1 15h13v-2H1z" fill="#3c68c8"/><path d="M11 1L5 9M10 6c3 2 3 5 0 8M3 11l7 2" stroke="#3c68c8" stroke-width="2.400" fill="none"/></svg>Pohledy</button>
      </nav>
    </aside>

    <section class="view">
      <svg class="scene">
        <g transform="translate(-339 -134)">
          <g fill="none" stroke="#c6c6c6">
            <path d="M912 133L1084 289M1277 464L1389 566M339 625L1389 498M339 871L1389 745M339 965L391 1013M1219 1013L1389 992"/>
          </g>
          <path d="M339 290L1141 1014M339 378L425 368M1084 289L1389 252" fill="none" stroke="#93bcbc"/>
          <path d="M339 290L1141 1014M339 378L425 368M1084 289L1389 252" fill="none" stroke="#108080" stroke-dasharray="6 6"/>
          <g id="grid-points" fill="#000"></g>
          <use href="#col-s" x="807" y="319"/><use href="#col-s" x="1071" y="287"/>
          <path d="M815 331l20-2 106 99-10 9z" fill="#545454"/>
          <path d="M815 331v22l116 103v-19z" fill="#9e9e9e"/>
          <path d="M1082 300l8-2 187 166h-13z" fill="#343474"/>
          <path d="M1087 305v25l177 161v-27z" fill="#7c7cd8"/>
          <path d="M1082 329l5-1 192 163-11 4z" fill="#6464b0"/>
          <path d="M425 368L545 477 941 430 1013 494 1277 464 1084 289z" fill="#545454" fill-opacity=".75"/>
          <g fill-opacity=".92"><use href="#col-l" x="411" y="367"/><use href="#col-l" x="532" y="476"/><use href="#col-s" x="928" y="428"/><use href="#col-s" x="1000" y="493"/><use href="#col-s" x="1264" y="461"/></g>
          <path d="M425 368L438 379.800V367z" fill="#7f7f7f"/>
          <path d="M931 437h16v15l-16 4zM947 437h5v17h-5z" fill="#555" fill-opacity=".5"/>
          <path d="M1264 466h8v24l7 3-13 2-2-3z" fill="#5c5c78" fill-opacity=".6"/>
          <use href="#cap" x="411" y="364" width="28" height="10"/><use href="#cap" x="532" y="473" width="28" height="10"/><use href="#cap" x="807" y="316" width="28" height="10"/><use href="#cap" x="1071" y="284" width="28" height="10"/><use href="#cap" x="928" y="425" width="28" height="10"/><use href="#cap" x="1000" y="490" width="28" height="10"/><use href="#cap" x="1264" y="458" width="28" height="10"/>
          <path d="M425 368L545 477 941 430 1013 494 1277 464 1084 289zM820 321L941 430" fill="none" stroke="#111"/>
          <path d="M1276 466l-3 18M941 432v14" stroke="#444"/>
          <use href="#support" x="402" y="636"/><use href="#support" x="523" y="745"/><use href="#support" x="798" y="522"/><use href="#support" x="1062" y="490"/><use href="#support" x="919" y="631"/><use href="#support" x="991" y="696"/><use href="#support" x="1255" y="664"/>
          <g stroke-width="1.500" class="axis">
            <path d="M394 884l30-3" stroke="#f00000"/><path d="M423 878l10 2-10 3z" fill="#700000"/>
            <path d="M394 884l10 9" stroke="#00e000"/><path d="M404 890l4 6-7-1z" fill="#006000"/>
            <path d="M394 884v30" stroke="#0000ff" stroke-width="2"/><path d="M391 913h6l-3 9z" fill="#000080"/>
            <text x="438" y="882" fill="#8a3030">X</text><text x="408" y="902" fill="#00e000">Y</text><text x="391" y="935" fill="#0000ff">Z</text>
          </g>
        </g>
      </svg>
    </section>
  </main>

  <footer class="status">
    <span class="msg">Pracovní rovina</span>
    <div class="toggles"><button>UCHOP</button><button>RASTR</button><button>KARTEZ</button><button>OUCHOP</button><button>VLINIE</button><button>DXF</button></div>
    <span class="cell cs">SS: Globální X</span><span class="cell plane">Rovina: XY</span><span class="cell num">X: &nbsp;-0.132 m</span><span class="cell num">Y: &nbsp;11.810 m</span><span class="cell num z">Z: &nbsp;0.000 m</span>
    <span class="size-grip"></span>
  </footer>
</div>

<svg class="notes" aria-hidden="true">
  <g fill="none" stroke="#ed1c24" stroke-width="3"><path d="M23.500 161.500h133v27h-133zM22.500 843.500h133v26h-133zM820.500 68.500h89v31h-89z"/><path d="M367 177H236M371 859H240M764 174L809 114"/></g>
  <path d="M221 177l18-8v16zM226 859l18-8v16zM818 102l-3 18-12-9z" fill="#ed1c24"/>
</svg>
<script src="scene.js"></script>
</body>
</html>
```
FILE: styles.css
```css
* { box-sizing: border-box; }
body { margin: 0; font: 14px/20px "Noto Sans", "Open Sans", sans-serif; color: #000; overflow: hidden; }
button { margin: 0; padding: 0; border: 0; background: none; font: inherit; color: inherit; }
h1, h2 { margin: 0; font-size: inherit; font-weight: 400; }
ul { margin: 0; padding: 0; list-style: none; }
.defs { position: absolute; width: 0; height: 0; }

.window { height: 100vh; display: flex; flex-direction: column; background: #d0d4de; border: 1px solid #5f5f5f; }

.titlebar { display: flex; align-items: center; height: 37px; flex: none; background: #fff; padding: 0 2px 0 8px; }
.titlebar h1 { flex: 1; margin-left: 6px; }
.app-icon { width: 20px; height: 20px; }
.win-buttons { display: flex; }
.win-buttons button { width: 58px; height: 36px; display: grid; place-items: center; }
.win-buttons svg { width: 12px; height: 12px; fill: none; stroke: #000; }

.menubar { display: flex; align-items: center; height: 30px; flex: none; background: #d0d4de; color: #45484f; padding-left: 2px; font-size: 13px; }
.menubar > button { padding: 0 7px 0 8px; }
.menubar u { text-underline-offset: 2px; }
.menubar .grip { margin: 0 3px 0 2px; }
.doc-icon { width: 20px; height: 16px; margin-right: 3px; }
.doc-buttons { display: flex; margin-left: auto; padding: 4px 7px 0 0; gap: 11px; }
.doc-buttons svg { display: block; width: 10px; height: 10px; fill: none; stroke: #777; }

.grip { flex: none; width: 3px; height: 18px; background: repeating-linear-gradient(#9a9fac 0 2px, transparent 2px 4px); }
.toolbar { display: flex; flex: none; height: 32px; background: #c4c8d2; }
.group { display: flex; align-items: center; flex: none; height: 31px; padding: 0 0 0 1px; background: linear-gradient(#eef1f8, #e4e8f1 50%, #ced3de); border-radius: 3px; }
.group:last-child { flex: 1; }
.group.clip { overflow: hidden; }
.group .grip { margin: 0 3px; }
.group + .group .grip { margin: 0 4px; }
.tb { flex: none; width: 28px; height: 28px; display: grid; place-items: center; }
.tb svg { width: 20px; height: 20px; overflow: visible; }
.tb.on { background: linear-gradient(#f9bd78, #fcd49a 50%, #fff0b0); border: 1px solid #b9a078; border-radius: 2px; }
.tb.cut { width: 22px; justify-content: start; padding-left: 4px; overflow: hidden; }
.tb.dd { width: 43px; grid-template-columns: 28px 15px; }
.tb.dd::after { content: ""; border: 4px solid transparent; border-top: 5px solid #808490; border-bottom: 0; margin-right: 4px; }
.sep { flex: none; width: 2px; height: 18px; margin: 0 3px; border-left: 1px solid #a9adb8; border-right: 1px solid #fff; }
.xx { font: 9px "Liberation Serif", serif; fill: #222; }
.ax { font: 12px "Liberation Serif", serif; fill: #222; }
.combo { appearance: none; width: 216px; height: 22px; margin: 0 2px; padding: 0 20px 0 1px; border: 1px solid #fff; border-radius: 0; font: inherit; font-size: 13px; color: #000; overflow: hidden;
  background: conic-gradient(from -45deg at 50% 100%, #808490 90deg, transparent 0) no-repeat right 5px center / 0 0, linear-gradient(135deg, transparent 50%, #808490 0) no-repeat right 9px center / 4px 4px, linear-gradient(225deg, transparent 50%, #808490 0) no-repeat right 5px center / 4px 4px, linear-gradient(#e0e4ec, #e0e4ec) no-repeat right / 19px 100%, #fff; 
  background: linear-gradient(to top right, transparent 50%, #808490 50%) no-repeat right 9px center / 4px 4px, linear-gradient(to top left, transparent 50%, #808490 50%) no-repeat right 5px center / 4px 4px, linear-gradient(#e0e4ec, #e0e4ec) no-repeat right / 19px 100%, #fff; }

.work { flex: 1; min-height: 0; display: flex; gap: 5px; background: #cdd2de; padding-top: 1px; }
.dock { width: 332px; flex: none; display: flex; flex-direction: column; }
.panel { flex: 1; min-height: 0; display: flex; flex-direction: column; background: #e7ebf5; border: 1px solid #8b8f99; border-left: 0; border-top-color: #b0b4be; padding-right: 3px; }
.panel-head { display: flex; align-items: center; gap: 8px; height: 28px; flex: none; padding: 0 1px 3px 4px; color: #45484f; font-size: 13px; border-bottom: 1px solid #a9adb8; margin-right: -3px; }
.panel-head h2 { flex: 1; }
.panel-head button:last-child { margin-right: 4px; }
.panel-head svg { display: block; width: 10px; height: 10px; fill: none; stroke: #666; }
.tree-box { flex: 1; min-height: 0; display: flex; margin: 1px 0 0 3px; }
.tree { flex: 1; min-width: 0; overflow: hidden; background: #fcfbf3; }
.tree ul { padding-left: 19px; }
.tree li { position: relative; }
.tree li::before { content: ""; position: absolute; left: 11px; top: 0; bottom: 0; border-left: 1px dotted #777; }
.tree ul > li:last-child::before { bottom: auto; height: 11px; }
.row { position: relative; display: flex; align-items: center; height: 22px; padding: 2px 0 0 24px; }
.row::before { content: ""; position: absolute; left: 12px; width: 11px; top: 11px; border-top: 1px dotted #777; }
.exp { position: absolute; left: 6px; top: 7px; width: 11px; height: 11px; border: 1px solid #919191; border-radius: 1px; background: linear-gradient(#33518f, #33518f) no-repeat center / 7px 1px, linear-gradient(#fff, #e4e4e4); }
.exp.plus { background: linear-gradient(#33518f, #33518f) no-repeat center / 7px 1px, linear-gradient(#33518f, #33518f) no-repeat center / 1px 7px, linear-gradient(#fff, #e4e4e4); }
.row label { display: flex; align-items: center; white-space: nowrap; }
.row label svg { width: 16px; height: 16px; flex: none; margin: 0 5px 0 2px; }
.row input { appearance: none; flex: none; width: 13px; height: 13px; margin: 0 0 2px; border: 1px solid #3c3f46; background: linear-gradient(135deg, #d4d7df, #fbfbfd); display: grid; place-items: center; }
.row input:checked::after { content: ""; width: 9px; height: 9px; background: #000; clip-path: polygon(0 45%, 20% 35%, 40% 60%, 85% 5%, 100% 20%, 42% 92%); }
.row input.mixed::after { content: ""; width: 7px; height: 7px; background: #8f8f8f; }
.vscroll { width: 19px; display: flex; flex-direction: column; background: #f0f0f0; }
.vscroll button { height: 22px; display: grid; place-items: center; }
.vscroll svg { width: 10px; height: 6px; fill: none; stroke: #444; stroke-width: 2; }
.vscroll .thumb { height: 221px; margin: 105px 0 auto; background: #cdcdcd; }
.hscroll { display: flex; align-items: center; height: 20px; margin-left: 3px; background: #f0f0f0; flex: none; }
.hscroll button { width: 20px; display: grid; place-items: center; }
.hscroll svg { width: 6px; height: 10px; fill: none; stroke: #444; stroke-width: 2; }
.hscroll .track { flex: 1; height: 19px; }
.hscroll .thumb { display: block; width: 80%; height: 19px; background: #cdcdcd; }
.hscroll button:last-child { margin-right: 20px; }
.tabs { display: flex; align-items: flex-start; height: 30px; flex: none; gap: 7px; padding-left: 4px; color: #5b5f68; font-size: 13px; }
.tabs button { display: flex; align-items: center; height: 26px; padding: 5px 2px 0; gap: 1px; }
.tabs svg { width: 16px; height: 16px; }
.tabs .active { background: #f0f3f8; border: 1px solid #b4cdd4; border-top: 0; border-radius: 0 0 3px 3px; }

.view { flex: 1; min-width: 0; background: #fcfcfc; border: 1px solid #777; border-right-color: #bbb; border-bottom: 0; margin-bottom: 1px; }
.scene { display: block; width: 100%; height: 100%; }
.axis text { font: 10px "Liberation Sans", sans-serif; }

.status { flex: none; position: relative; display: flex; align-items: center; height: 28px; border-top: 1px solid #8b8f99; padding-left: 4px; font-family: "Open Sans", "Noto Sans", sans-serif; font-size: 13px; color: #222; background: linear-gradient(#dcdfe5, #b7bbc4 45%, #a6aab4 50%, #b9bdc6); }
.msg { flex: 1; }
.toggles { display: flex; gap: 2px; height: 24px; font: 13px/18px "Liberation Sans", sans-serif; margin-right: 100px; }
.toggles button { padding: 0 5px 3px 2px; border: 1px solid #111; border-right-color: #fff; border-bottom-color: #fff; }
.toggles button:nth-child(2) { padding-right: 0; }
.toggles button:nth-child(3) { padding-left: 5px; }
.cell { width: 74px; height: 22px; border-left: 1px solid #8c909a; padding-left: 1px; white-space: nowrap; }
.cell.num { font-family: "Noto Sans", sans-serif; font-size: 12px; }
.cell.cs { width: 88px; border-left: 0; }
.cell.plane { width: 88px; }
.cell.z { width: 95px; }
.size-grip { position: absolute; right: 1px; bottom: 1px; width: 10px; height: 10px; background: radial-gradient(#777 40%, transparent 45%) 0 0 / 4px 4px; clip-path: polygon(100% 0, 100% 100%, 0 100%); }

.notes { position: absolute; left: 0; top: 0; width: 100%; height: 100%; pointer-events: none; }
```
FILE: scene.js
```js
// Raster points of the work plane: a skewed lattice, snapped to whole pixels.
const grid = document.getElementById("grid-points");
let d = "";
for (let i = -25; i < 30; i++) {
  for (let j = -20; j < 50; j++) {
    const x = Math.round(417 + i * 66 + j * 24.2);
    const y = Math.round(294 - i * 8 + j * 21.77);
    if (x > 338 && x < 2600 && y > 133 && y < 1600) d += `M${x} ${y}h1v1h-1z`;
  }
}
const path = document.createElementNS("http://www.w3.org/2000/svg", "path");
path.setAttribute("d", d);
grid.append(path);
```
